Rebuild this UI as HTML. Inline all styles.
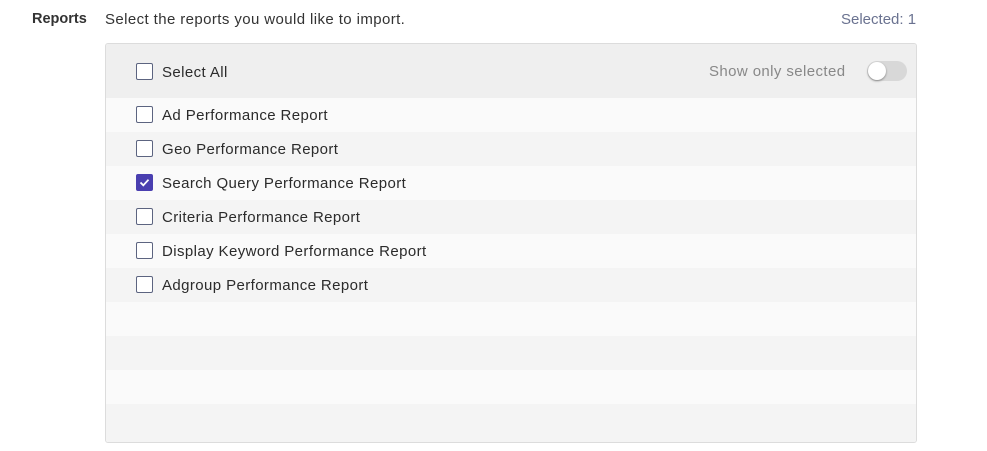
<!DOCTYPE html>
<html><head><style>
body{margin:0;width:987px;height:451px;background:#fff;font-family:"Liberation Sans",sans-serif;position:relative;overflow:hidden}
.t{position:absolute;font-size:15px;white-space:nowrap;letter-spacing:0.4px}
.box{position:absolute;left:105px;top:43px;width:810px;height:398px;border:1px solid #dcdcdc;border-radius:3px;overflow:hidden;background:#f5f5f5}
.hdr{height:54px;background:#efefef;position:relative}
.row{height:34px;position:relative}
.row:nth-child(odd){background:#fafafa}
.row:nth-child(even){background:#f4f4f4}
.cb{position:absolute;left:30px;top:8px;width:15px;height:15px;border:1px solid #5c6480;border-radius:2px;background:#fff}
.lbl{position:absolute;left:56px;top:9px;font-size:15px;color:#2b2b2b;letter-spacing:0.4px;white-space:nowrap}
</style></head><body>
<div class="t" style="left:32px;top:11px;font-weight:bold;color:#333;font-size:14.5px;letter-spacing:0">Reports</div>
<div class="t" style="left:105px;top:11px;color:#333">Select the reports you would like to import.</div>
<div class="t" style="left:841px;top:11px;color:#6a7290;letter-spacing:0">Selected: 1</div>
<div class="box">
<div class="hdr">
<div class="cb" style="top:19px"></div><div class="lbl" style="top:20px">Select All</div>
<div class="t" style="left:603px;top:19px;color:#888">Show only selected</div>
<div style="position:absolute;left:761px;top:17px;width:40px;height:20px;border-radius:10px;background:#d8d8d8"></div>
<div style="position:absolute;left:762px;top:18px;width:18px;height:18px;border-radius:50%;background:#fff;box-shadow:0 1px 2px rgba(0,0,0,.4)"></div>
</div>
<div>
<div class="row"><div class="cb"></div><div class="lbl">Ad Performance Report</div></div>
<div class="row"><div class="cb"></div><div class="lbl">Geo Performance Report</div></div>
<div class="row"><div class="cb" style="background:#4a3fb0;border-color:#4a3fb0"><svg width="15" height="15" viewBox="0 0 15 15"><path d="M3.5 7.5l2.8 2.8 5.2-5.6" stroke="#fff" stroke-width="1.8" fill="none"/></svg></div><div class="lbl">Search Query Performance Report</div></div>
<div class="row"><div class="cb"></div><div class="lbl">Criteria Performance Report</div></div>
<div class="row"><div class="cb"></div><div class="lbl">Display Keyword Performance Report</div></div>
<div class="row"><div class="cb"></div><div class="lbl">Adgroup Performance Report</div></div>
<div class="row"></div><div class="row"></div><div class="row"></div><div class="row" style="height:40px"></div>
</div>
</div>
</body></html>
